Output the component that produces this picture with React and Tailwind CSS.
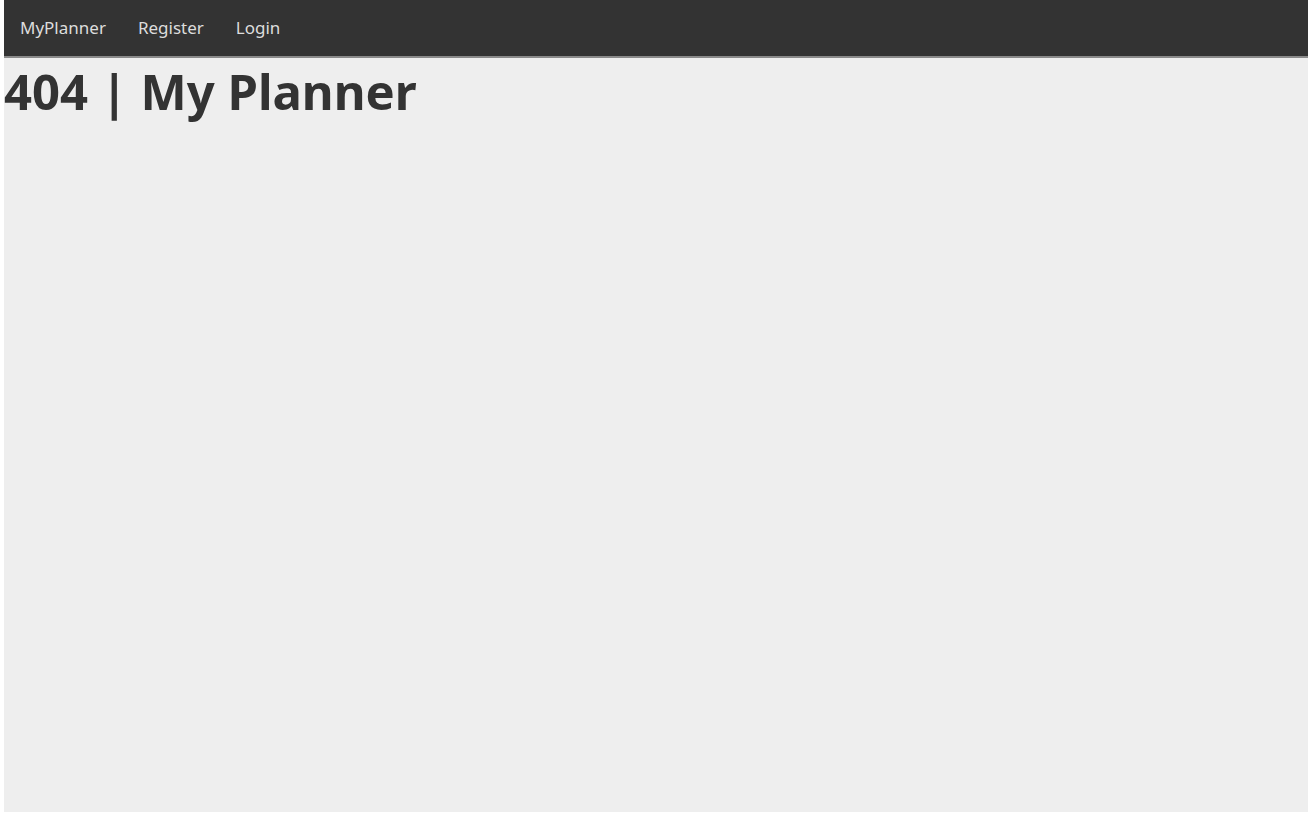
export default function App() {
  return (
    <div className="h-[813px] bg-white pl-1 pb-px" style={{ fontFamily: '"Noto Sans", "Open Sans", sans-serif' }}>
      <div className="flex h-full flex-col bg-[#eeeeee]">
        <nav className="flex h-[58px] items-center border-b-2 border-[#8a8a8a] bg-[#333333]">
          <a href="#" className="px-4 text-[17px] text-[#dddddd]">MyPlanner</a>
          <a href="#" className="px-4 text-[17px] text-[#dddddd]">Register</a>
          <a href="#" className="px-4 text-[17px] text-[#dddddd]">Login</a>
        </nav>
        <h1 className="text-[49px] font-bold leading-[66px] text-[#333333]">404 | My Planner</h1>
      </div>
    </div>
  );
}
